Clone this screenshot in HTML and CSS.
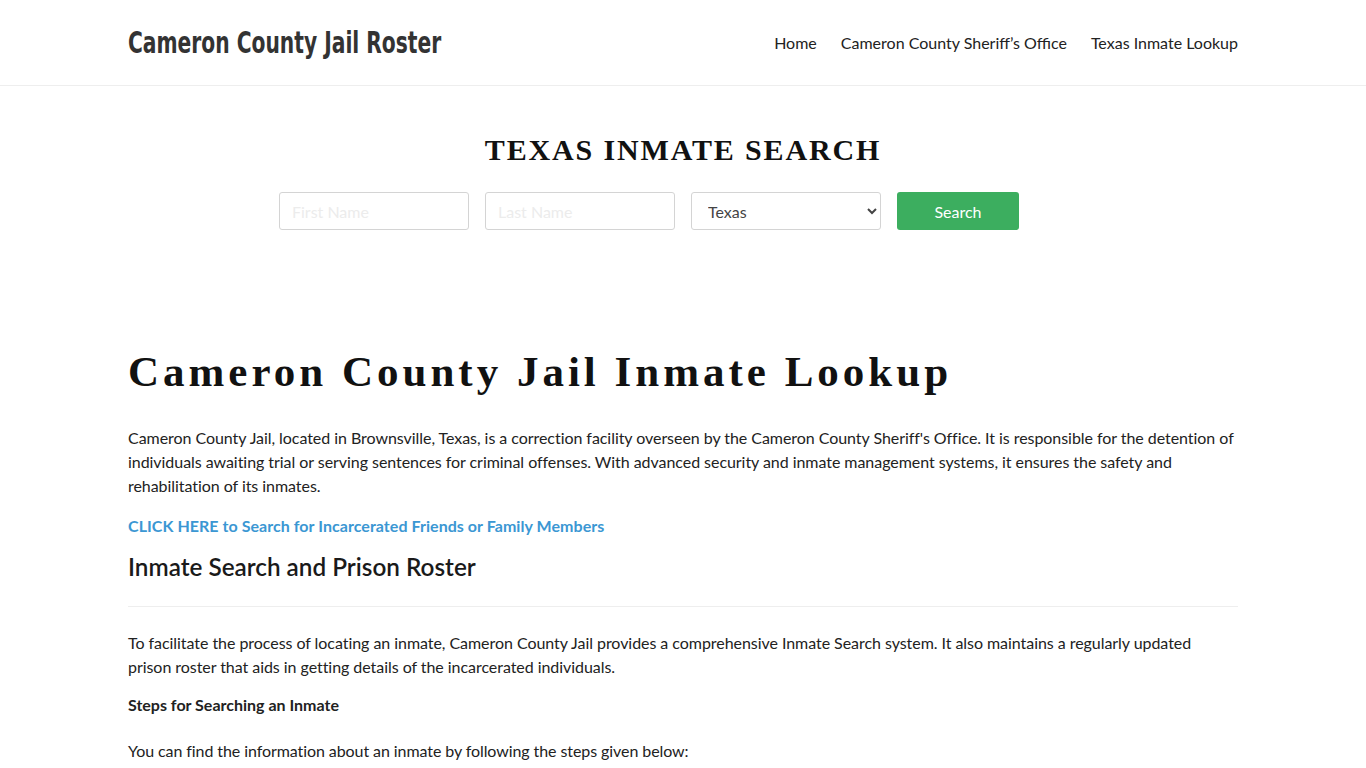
FILE: index.html
```html
<!DOCTYPE html>
<html lang="en">
<head>
<meta charset="utf-8">
<title>Cameron County Jail Roster</title>
<link rel="stylesheet" href="styles.css">
</head>
<body>
<header class="site-header">
  <div class="container header-inner">
    <a class="logo" href="#">Cameron County Jail Roster</a>
    <nav class="nav">
      <a href="#">Home</a>
      <a href="#">Cameron County Sheriff’s Office</a>
      <a href="#">Texas Inmate Lookup</a>
    </nav>
  </div>
</header>
<section class="search">
  <h2 class="search-title">TEXAS INMATE SEARCH</h2>
  <div class="container">
    <form class="search-form">
      <input class="field" type="text" placeholder="First Name">
      <input class="field" type="text" placeholder="Last Name">
      <select class="field select">
        <option>Texas</option>
      </select>
      <button class="btn" type="button">Search</button>
    </form>
  </div>
</section>
<main class="container content">
  <h1 class="page-title">Cameron County Jail Inmate Lookup</h1>
  <p>Cameron County Jail, located in Brownsville, Texas, is a correction facility overseen by the Cameron County Sheriff's Office. It is responsible for the detention of individuals awaiting trial or serving sentences for criminal offenses. With advanced security and inmate management systems, it ensures the safety and rehabilitation of its inmates.</p>
  <p class="cta"><a href="#">CLICK HERE to Search for Incarcerated Friends or Family Members</a></p>
  <h2 class="section-title">Inmate Search and Prison Roster</h2>
  <hr class="divider">
  <p>To facilitate the process of locating an inmate, Cameron County Jail provides a comprehensive Inmate Search system. It also maintains a regularly updated prison roster that aids in getting details of the incarcerated individuals.</p>
  <p class="steps"><strong>Steps for Searching an Inmate</strong></p>
  <p class="last">You can find the information about an inmate by following the steps given below:</p>
</main>
</body>
</html>
```
FILE: styles.css
```css
* { box-sizing: border-box; }
html, body { margin: 0; padding: 0; }
body {
  font-family: Lato, "Open Sans", sans-serif;
  font-size: 16px;
  line-height: 24px;
  color: #222;
  background: #fff;
}
a { text-decoration: none; }
.container {
  width: 1110px;
  margin: 0 auto;
}
.site-header {
  border-bottom: 1px solid #eee;
  height: 86px;
}
.header-inner {
  display: flex;
  align-items: center;
  justify-content: space-between;
  height: 85px;
}
.logo {
  display: inline-block;
  font-family: "DejaVu Sans Condensed", "DejaVu Sans", sans-serif;
  font-stretch: condensed;
  font-weight: 700;
  font-size: 30px;
  color: #333;
  transform: scaleX(0.75);
  transform-origin: left center;
}
.nav {
  display: flex;
  gap: 24px;
}
.nav a {
  color: #222;
  font-size: 16px;
}
.search {
  padding-top: 44px;
  height: 258px;
}
.search-title {
  margin: 0 0 22px;
  text-align: center;
  font-family: "Liberation Serif", serif;
  font-weight: 700;
  font-size: 30px;
  line-height: 40px;
  letter-spacing: 1.85px;
  color: #111;
}
.search-form {
  display: flex;
  gap: 16px;
  padding-left: 151px;
}
.field {
  width: 190px;
  height: 38px;
  border: 1px solid #d4d4d4;
  border-radius: 3px;
  padding: 0 12px;
  font-family: Lato, sans-serif;
  font-size: 16px;
  color: #444;
  background: #fff;
}
.field::placeholder { color: #ececec; }
.select { padding-left: 12px; }
.btn {
  width: 122px;
  height: 38px;
  border: 0;
  border-radius: 3px;
  background: #3cae5f;
  color: #fff;
  font-family: Lato, sans-serif;
  font-size: 16px;
}
.content { padding-top: 0; }
.page-title {
  margin: 0 0 26px;
  font-family: "Liberation Serif", serif;
  font-weight: 700;
  font-size: 43px;
  line-height: 56px;
  letter-spacing: 4px;
  color: #111;
}
.content p {
  margin: 0 0 16px;
  letter-spacing: -0.05px;
}
.content p.cta { margin-bottom: 13px; letter-spacing: 0.05px; }
.cta a {
  color: #3b97d3;
  font-weight: 700;
}
.section-title {
  font-family: Lato, sans-serif;
  font-weight: 600;
  font-size: 24.3px;
  line-height: 32px;
  margin: 0 0 23px;
  color: #1a1a1a;
}
.divider {
  border: 0;
  border-top: 1px solid #eee;
  margin: 0 0 24px;
}
.content p.steps {
  font-size: 16px;
  line-height: 20px;
  margin-bottom: 24px;
  letter-spacing: 0;
}
.content p.last { letter-spacing: -0.08px; }
```
